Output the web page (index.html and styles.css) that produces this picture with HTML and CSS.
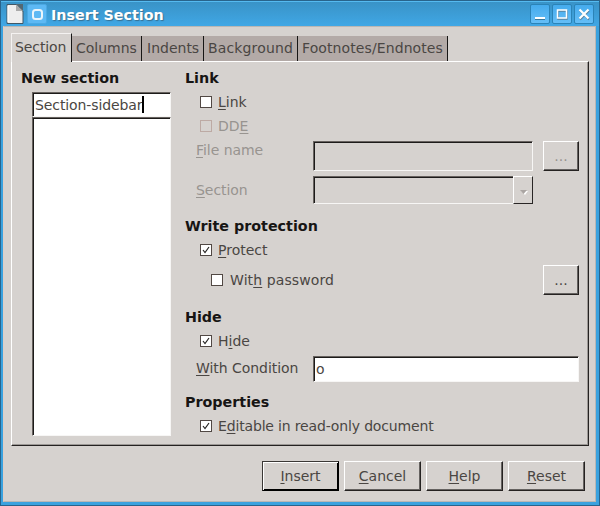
FILE: index.html
```html
<!DOCTYPE html>
<html lang="en">
<head>
<meta charset="utf-8">
<title>Insert Section</title>
<link rel="stylesheet" href="styles.css">
</head>
<body>
<div class="window">
  <header class="titlebar">
    <svg class="doc" width="18" height="22" viewBox="0 0 18 22"><path d="M1 1.5H11L17 8V20.5H1Z" fill="#eee" stroke="#405766"/><path d="M10 1L17 9V1Z" fill="#536873"/><path d="M10 1.5V8H17Z" fill="#aaa"/><path d="M2 3V19" stroke="#fff"/></svg>
    <span class="wbtn menu"><svg width="18" height="18"><rect x="5" y="5" width="9" height="9" rx="2.5" fill="none" stroke="#eaf5fb" stroke-width="2"/></svg></span>
    <h1 class="title"><span>Insert Section</span></h1>
    <div class="controls">
      <span class="wbtn"><svg width="18" height="18"><path d="M4 14.5H14" stroke="#39789b"/><path d="M4 13H14" stroke="#fff" stroke-width="2"/></svg></span>
      <span class="wbtn"><svg width="18" height="18"><rect x="5" y="6" width="9" height="8" fill="none" stroke="#58819a" stroke-width="1.5"/><rect x="4.5" y="5" width="9" height="8" fill="none" stroke="#fff" stroke-width="1.5"/></svg></span>
      <span class="wbtn"><svg width="18" height="18"><path d="M5 5.5L14 14.5M14 5.5L5 14.5" stroke="#58819a" stroke-width="2"/><path d="M4.5 4.5L13.5 13.5M13.5 4.5L4.5 13.5" stroke="#fff" stroke-width="2.2"/></svg></span>
    </div>
  </header>
  <main class="body">
    <nav class="tabs">
      <span class="tab active">Section</span><span class="tab columns">Columns</span><span class="tab indents">Indents</span><span class="tab background">Background</span><span class="tab notes">Footnotes/Endnotes</span>
    </nav>
    <div class="panel">
      <section class="left">
        <h2>New section</h2>
        <div class="field name">Section-sidebar<i class="caret"></i></div>
        <div class="field list"></div>
      </section>
      <section class="right">
        <h2>Link</h2>
        <div class="row"><i class="box"></i><span><u>L</u>ink</span></div>
        <div class="row off"><i class="box"></i><span>DD<u>E</u></span></div>
        <div class="line file off"><label><u>F</u>ile name</label><div class="field input"></div><span class="btn dots">...</span></div>
        <div class="line combo off"><label><u>S</u>ection</label><div class="field input"><span class="drop"><svg width="8" height="6"><path d="M1 1H8L5 5Z" fill="#fff"/><path d="M0 0H7L3.5 4Z" fill="#aaa5a2"/></svg></span></div></div>
        <h2 class="write">Write protection</h2>
        <div class="row protect"><i class="box"><svg width="10" height="10"><path d="M2 5L4 7.5L8 2" /></svg></i><span><u>P</u>rotect</span></div>
        <div class="row password"><i class="box"></i><span>Wit<u>h</u> password</span><span class="btn dots">...</span></div>
        <h2 class="hide">Hide</h2>
        <div class="row"><i class="box"><svg width="10" height="10"><path d="M2 5L4 7.5L8 2" /></svg></i><span>H<u>i</u>de</span></div>
        <div class="line condition"><label><u>W</u>ith Condition</label><div class="field input">o</div></div>
        <h2 class="props">Properties</h2>
        <div class="row editable"><i class="box"><svg width="10" height="10"><path d="M2 5L4 7.5L8 2" /></svg></i><span>E<u>d</u>itable in read-only document</span></div>
      </section>
    </div>
    <footer class="actions">
      <span class="btn default"><span><u>I</u>nsert</span></span><span class="btn"><span><u>C</u>ancel</span></span><span class="btn"><span><u>H</u>elp</span></span><span class="btn"><span><u>R</u>eset</span></span>
    </footer>
  </main>
</div>
</body>
</html>
```
FILE: styles.css
```css
* { box-sizing: border-box; }
body { margin: 0; width: 600px; height: 506px; overflow: hidden; font: 14px/18px "DejaVu Sans", sans-serif; color: #4a4643; }
h1, h2 { margin: 0; font: bold 14.3px/18px "DejaVu Sans", sans-serif; }
h2 { height: 24px; padding-top: 3px; color: #171514; }
u { text-underline-offset: 2px; text-decoration-thickness: 1px; text-decoration-skip-ink: none; }
svg { display: block; }
.window { height: 506px; border: 1px solid #28648c; background: #3aa2df; padding: 0 3px 3px 2px; }
.titlebar { height: 25px; margin: 0 -3px 0 -2px; padding: 2px 5px 0 5px; display: flex; border-top: 1px solid #55baf0; background: linear-gradient(#3993c7, #40a7e5); }
.doc { margin-top: -1px; }
.wbtn { width: 20px; height: 20px; border: 1px solid #2b83b7; border-radius: 2px; background: linear-gradient(#45abed, #65bef7); }
.menu { margin-left: 3px; border-color: #4ba9e3; background: #5db9f4; }
.title { margin: 2px 0 0 4px; color: #fff; text-shadow: 1px 1px 1px #386f91; white-space: nowrap; }
.controls { display: flex; gap: 2px; margin-left: auto; }
.body { height: 476px; background: #d6d2cf; border: 1px solid #b9b7b5; border-left-color: #dfcec5; padding: 6px 6px 0 7px; }
.tabs { display: flex; height: 28px; align-items: flex-end; }
.tab { height: 25px; padding: 3px 0 0 4px; background: #b3aaa7; border-right: 1px solid #171615; white-space: nowrap; }
.tab.active { height: 29px; width: 61px; margin-bottom: -1px; padding: 4px 0 0 3px; background: #d6d2cf; border-left: 1px solid #f4f2f1; border-top: 1px solid #f4f2f1; z-index: 1; letter-spacing: -.1px; }
.columns { width: 70px; }
.indents { width: 62px; padding-left: 5px; }
.background { width: 94px; letter-spacing: .15px; }
.notes { width: 150px; letter-spacing: .1px; }
.panel { height: 385px; border: 1px solid; border-color: #fff #252221 #252221 #fff; box-shadow: inset -1px -1px #9c9895; padding: 4px 9px 0 8px; display: flex; }
.left { width: 165px; }
.left h2 { padding-left: 1px; }
.field { border: 1px solid; border-color: #67625f #f7f6f5 #f7f6f5 #67625f; box-shadow: inset 1px 1px #1d1b1a; background: #fff; }
.left .field { width: 139px; margin-left: 12px; }
.name { height: 25px; margin-top: 2px; padding: 3px 0 0 2px; display: flex; letter-spacing: -.1px; }
.caret { width: 2px; height: 17px; background: #000; }
.list { height: 319px; }
.right { flex: 1; padding-left: 2px; }
.row { height: 24px; padding-left: 15px; display: flex; align-items: center; white-space: nowrap; }
.box { width: 12px; height: 12px; border: 1px solid #514844; background: #fff; margin-right: 6px; }
.box path { fill: none; stroke: #252321; stroke-width: 1.2; }
.editable { letter-spacing: -.16px; }
.off { color: #989490; }
.off .box { border-color: #bdaaa4; background: none; }
.off .field { background: #d6d2cf; }
.line { display: flex; }
.line label { width: 128px; padding-left: 11px; white-space: nowrap; }
.line label { letter-spacing: -.05px; }
.file { height: 30px; margin-top: 3px; }
.input { width: 220px; }
.combo { height: 28px; margin-top: 5px; }
.combo label { padding-top: 5px; }
.combo .field { display: flex; justify-content: flex-end; border-right: 0; }
.drop { width: 20px; height: 28px; margin: -1px 0; border: 1px solid; border-color: #fff #292625 #292625 #fff; background: #d6d2cf; padding: 13px 0 0 6px; }
.btn { border: 1px solid; border-color: #fff #252221 #252221 #fff; box-shadow: inset -1px -1px #656260; display: flex; justify-content: center; align-items: center; background: #d6d2cf; }
.dots { width: 36px; height: 30px; margin-left: 10px; }
.write { margin-top: 10px; }
.protect { height: 23px; }
.password { height: 30px; margin-top: 4px; padding-left: 26px; }
.password .box { margin-right: 7px; }
.password > span:not(.btn) { letter-spacing: .1px; }
.password .dots { margin-left: auto; }
.hide { margin-top: 10px; }
.condition { height: 26px; margin-top: 3px; }
.condition label { padding-top: 3px; }
.condition .field { width: 266px; padding: 3px 2px; }
.props { margin-top: 8px; }
.actions { display: flex; justify-content: flex-end; gap: 5px; padding: 15px 4px 0 0; }
.actions .btn { width: 77px; height: 30px; }
.actions .default { border-color: #3b3735 #000 #000 #3b3735; box-shadow: inset 1px 1px #fff, inset -1px -1px #000; }
```
